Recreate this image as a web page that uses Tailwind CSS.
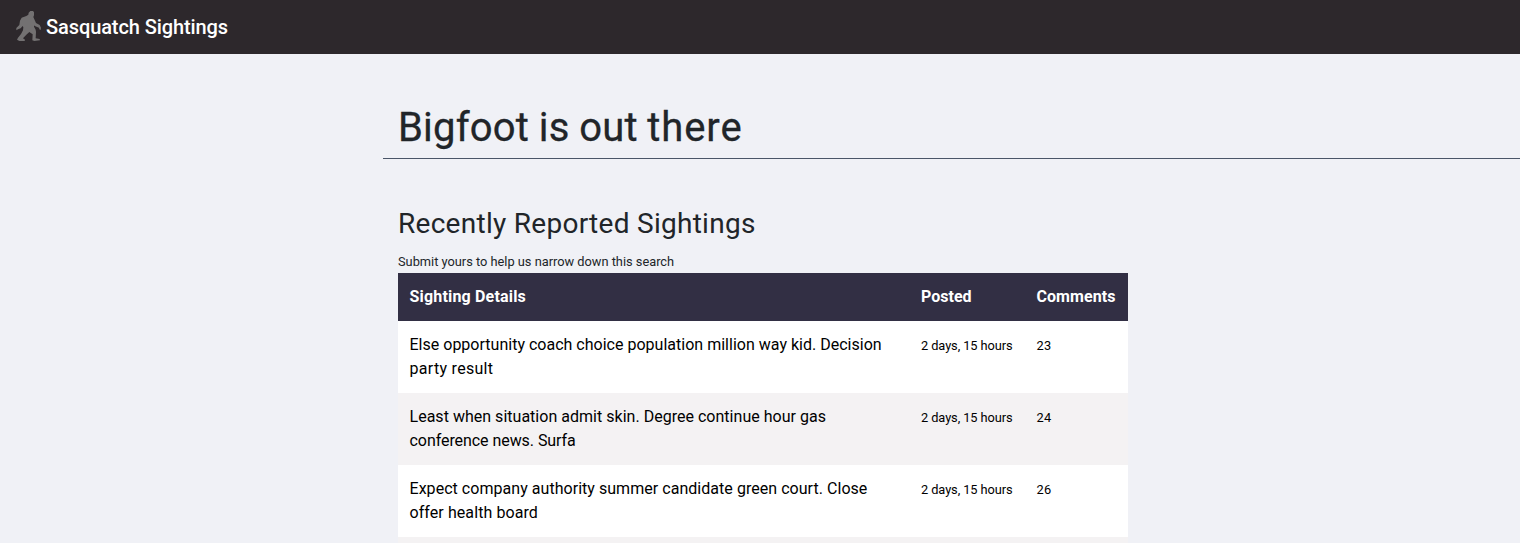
<!DOCTYPE html>
<html lang="en">
<head>
<meta charset="utf-8">
<title>Sasquatch Sightings</title>
<script src="https://cdn.jsdelivr.net/npm/@tailwindcss/browser@4"></script>
</head>
<body class="bg-[#f0f1f6] h-[543px] overflow-hidden font-['Roboto',sans-serif] text-[#212529]">
<header class="h-[54px] bg-[#2d282c] flex items-center pl-4">
  <svg class="w-[26px] h-[32px] shrink-0" viewBox="48 33 78 96" fill="#737172"><path d="M86 38 91 33 99 33 102 37 102 46 100 51 104 60 108 69 119 75 123 83 122 90 118 88 117 83 104 78 102 76 102 80 107 89 108 96 107 115 119 117 120 121 103 123 97 121 98 103 88 96 79 104 69 115 75 119 74 123 58 123 51 119 54 113 63 102 69 91 70 82 68 78 62 85 54 88 49 91 49 84 58 75 60 62 65 53 79 48 85 44Z"/></svg>
  <span class="ml-1 whitespace-nowrap text-[20px] leading-[30px] font-medium tracking-[-0.09px] text-white">Sasquatch Sightings</span>
</header>
<main class="ml-[383px] h-[489px] overflow-hidden">
  <div class="pt-[50px] h-[105px] pl-[15px] border-b border-[#4a5568]">
    <h1 class="text-[40px] leading-[48px] tracking-[0.5px] [-webkit-text-stroke:0.3px_#212529]"><span class="tracking-[0.2px] [word-spacing:-0.5px]">Bigfoot is out </span><span class="tracking-[0.9px]">there</span></h1>
  </div>
  <section class="pl-[15px] w-[745px]">
    <h2 class="pt-[48px] text-[28px] leading-[34px] tracking-[0.28px]">Recently Reported Sightings</h2>
    <p class="mt-[11px] h-[21px] text-[12.8px] leading-[20px]">Submit yours to help us narrow down this search</p>
    <div class="h-12 bg-[#322f44] text-white font-bold text-[16px] leading-6 grid grid-cols-[511.5px_115.5px_103px] items-center pl-[11.5px]">
      <div class="tracking-[0.18px]">Sighting Details</div><div>Posted</div><div class="tracking-[0.06px]">Comments</div>
    </div>
    <div class="h-[72px] bg-white text-black grid grid-cols-[511.5px_115.5px_103px] pl-[11.5px] pt-3 leading-6">
      <div><span class="tracking-[0.01px]">Else opportunity coach choice population million way kid. Decision</span><br><span class="tracking-[0.3px]">party result</span></div>
      <div class="text-[12.8px] tracking-[-0.08px] pt-px">2 days, 15 hours</div><div class="text-[12.8px] tracking-[0.4px] pt-px">23</div>
    </div>
    <div class="h-[72px] bg-[#f4f2f3] text-black grid grid-cols-[511.5px_115.5px_103px] pl-[11.5px] pt-3 leading-6">
      <div><span class="tracking-[0.02px]">Least when situation admit skin. Degree continue hour gas</span><br><span class="tracking-[-0.06px]">conference news. Surfa</span></div>
      <div class="text-[12.8px] tracking-[-0.08px] pt-px">2 days, 15 hours</div><div class="text-[12.8px] tracking-[0.4px] pt-px">24</div>
    </div>
    <div class="h-[72px] bg-white text-black grid grid-cols-[511.5px_115.5px_103px] pl-[11.5px] pt-3 leading-6">
      <div><span class="tracking-[0.04px]">Expect company authority summer candidate green court. Close</span><br><span class="tracking-[0.08px]">offer health board</span></div>
      <div class="text-[12.8px] tracking-[-0.08px] pt-px">2 days, 15 hours</div><div class="text-[12.8px] tracking-[0.4px] pt-px">26</div>
    </div>
    <div class="h-[6px] bg-[#f4f2f3]"></div>
  </section>
</main>
</body>
</html>
